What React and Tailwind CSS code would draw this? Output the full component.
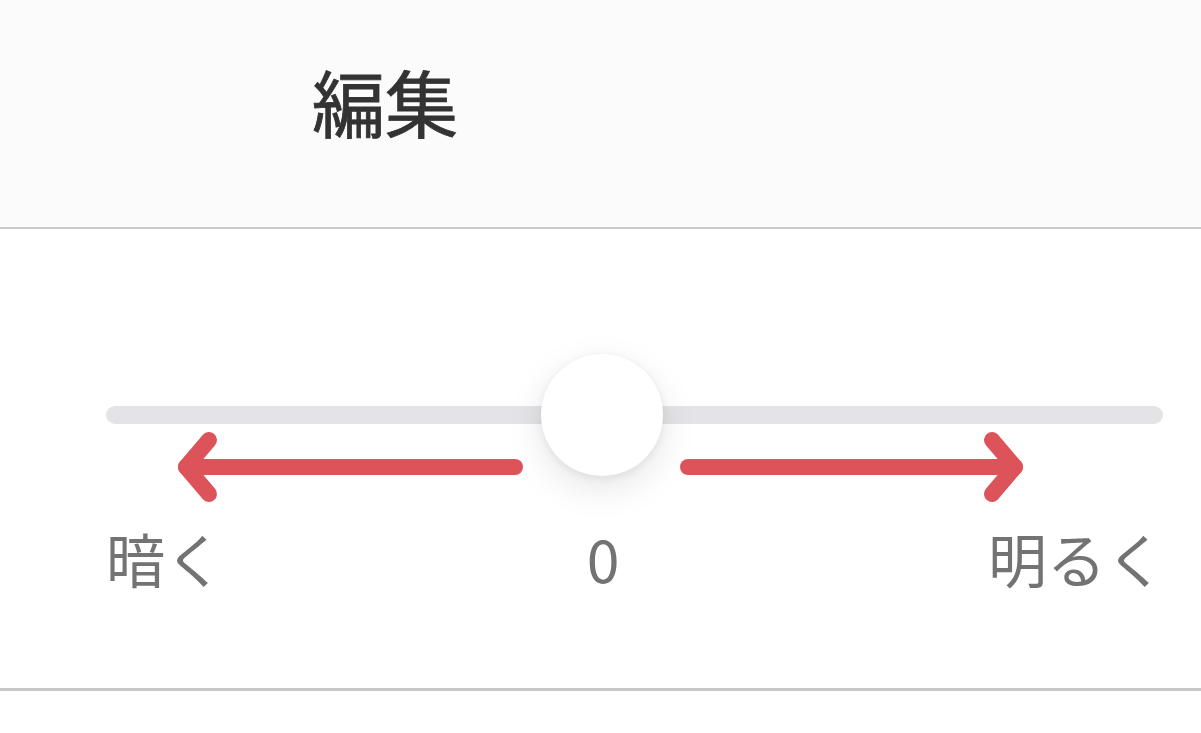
export default function App() {
  const font = { fontFamily: '"Noto Sans CJK JP", "Noto Sans", sans-serif' };
  return (
    <div className="w-[1201px] h-[733px] bg-white overflow-hidden" style={font}>
      <div className="h-[229px] bg-[#fbfbfb] border-b-2 border-[#c9c9c9] flex items-start pt-[64px] pl-[312px]">
        <span className="text-[73px] leading-none font-normal text-[#333333] [-webkit-text-stroke:0.8px_#333333]">編集</span>
      </div>
      <div className="h-[462px] border-b-[3px] border-[#c8c8c8] flex flex-col">
        <div className="relative mt-[177px] ml-[106px] w-[1057px] h-[18px] rounded-full bg-[#e4e4e6]">
          <div className="absolute left-[435px] top-[-52px] w-[122px] h-[122px] rounded-full bg-white shadow-[0_12px_36px_rgba(0,0,0,0.10),0_2px_8px_rgba(0,0,0,0.07)] z-10"></div>
        </div>
        <svg width="1201" height="86" viewBox="0 0 1201 86" className="block">
          <g stroke="#dc5459" strokeWidth="16" strokeLinecap="round" strokeLinejoin="round" fill="none">
            <path d="M515 43 H186" />
            <path d="M209 16 L186 43 L209 70" />
            <path d="M688 43 H1015" />
            <path d="M992 16 L1015 43 L992 70" />
          </g>
        </svg>
        <div className="grid grid-cols-[495px_216px_1fr] mt-[18px] text-[59px] leading-none text-[#737373]">
          <div className="pl-[106px]">暗く</div>
          <div className="text-center">0</div>
          <div className="text-right pr-[36px]">明るく</div>
        </div>
      </div>
    </div>
  );
}
